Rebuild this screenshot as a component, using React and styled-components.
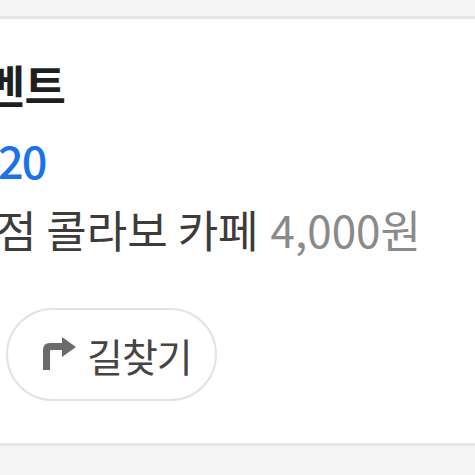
import React from 'react';
import styled, { createGlobalStyle } from 'styled-components';

const GlobalStyle = createGlobalStyle`
  html, body {
    margin: 0;
    padding: 0;
    background: #f5f5f5;
  }
  body {
    font-family: "Noto Sans CJK KR", "Noto Sans", sans-serif;
  }
`;

const Page = styled.div`
  width: 475px;
  height: 475px;
  padding-top: 16px;
  box-sizing: border-box;
  overflow: hidden;
`;

const Card = styled.section`
  background: #ffffff;
  border-top: 3px solid #e6e6e6;
  border-bottom: 3px solid #e6e6e6;
  height: 430px;
  box-sizing: border-box;
  padding: 38px 0 0 0;
  display: flex;
  flex-direction: column;
  overflow: hidden;
`;

const Line = styled.div`
  white-space: nowrap;
  height: 56px;
  line-height: 56px;
  margin-left: ${p => p.$shift || 0}px;
  margin-top: ${p => p.$gap || 0}px;
`;

const Title = styled(Line)`
  font-size: 45px;
  font-weight: 700;
  color: #1f1f1f;
  letter-spacing: -1px;
`;

const Period = styled(Line)`
  font-size: 45px;
  font-weight: 500;
  color: #1a73e8;
  letter-spacing: -2px;
`;

const Detail = styled(Line)`
  font-size: 44px;
  color: #3c3c3c;
  letter-spacing: 0;
`;

const Price = styled.span`
  color: #8a8a8a;
  margin-left: 12px;
`;

const Actions = styled.div`
  display: flex;
  margin-top: 51px;
  padding-left: 6px;
`;

const RouteButton = styled.button`
  display: flex;
  align-items: center;
  gap: 11px;
  width: 211px;
  height: 93px;
  box-sizing: border-box;
  padding: 0 0 0 35px;
  border: 2px solid #e3e3e3;
  border-radius: 47px;
  background: #ffffff;
  font-family: "Noto Sans CJK KR", "Noto Sans", sans-serif;
  font-size: 39px;
  color: #454545;
  letter-spacing: -1px;
  cursor: pointer;

  svg {
    margin-top: -2px;
  }
`;

const TurnIcon = () => (
  <svg width="33" height="33" viewBox="0 0 33 33" fill="#6b6b6b">
    <path d="M0 33 V13 Q0 6 7 6 H19 V0 L33 10 L19 20 V13 H8 Q7 13 7 14 V33 Z" />
  </svg>
);

export default function App() {
  return (
    <>
      <GlobalStyle />
      <Page>
        <Card>
          <Title $shift={-16}>벤트</Title>
          <Period $shift={-2} $gap={19}>20</Period>
          <Detail $shift={-4} $gap={13}>
            점 콜라보 카페<Price>4,000원</Price>
          </Detail>
          <Actions>
            <RouteButton type="button">
              <TurnIcon />
              길찾기
            </RouteButton>
          </Actions>
        </Card>
      </Page>
    </>
  );
}
